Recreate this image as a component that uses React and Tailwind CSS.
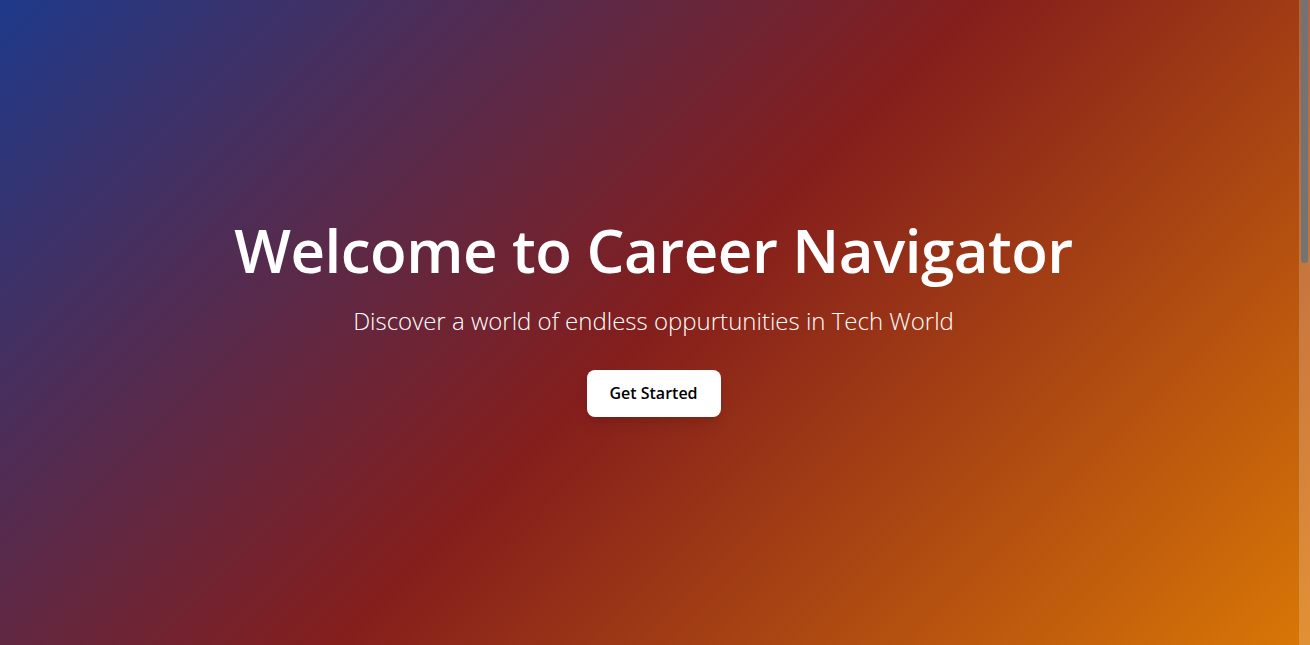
export default function App() {
  return (
    <div className="relative h-screen w-full overflow-hidden bg-[linear-gradient(135deg,#1e3a8a,#841e1c,#d97706)] font-['Open_Sans',sans-serif]">
      <div className="flex h-full flex-col items-center justify-center pb-[14px] pr-[3px] text-center">
        <h1 className="text-[60px] font-semibold leading-[1.2] tracking-[-0.5px] text-white">
          Welcome to Career Navigator
        </h1>
        <p className="mt-[18px] text-[24px] font-light leading-[1.4] text-white">
          Discover a world of endless oppurtunities in Tech World
        </p>
        <button className="mt-[32px] h-[47px] w-[134px] rounded-lg bg-white text-[16px] font-semibold text-black shadow-lg">
          Get Started
        </button>
      </div>
      <div className="absolute right-0 top-0 h-full w-[11px] bg-white/20">
        <div className="ml-[2px] mt-0 h-[263px] w-[7px] rounded-b-full bg-[#737373]" />
      </div>
    </div>
  );
}
